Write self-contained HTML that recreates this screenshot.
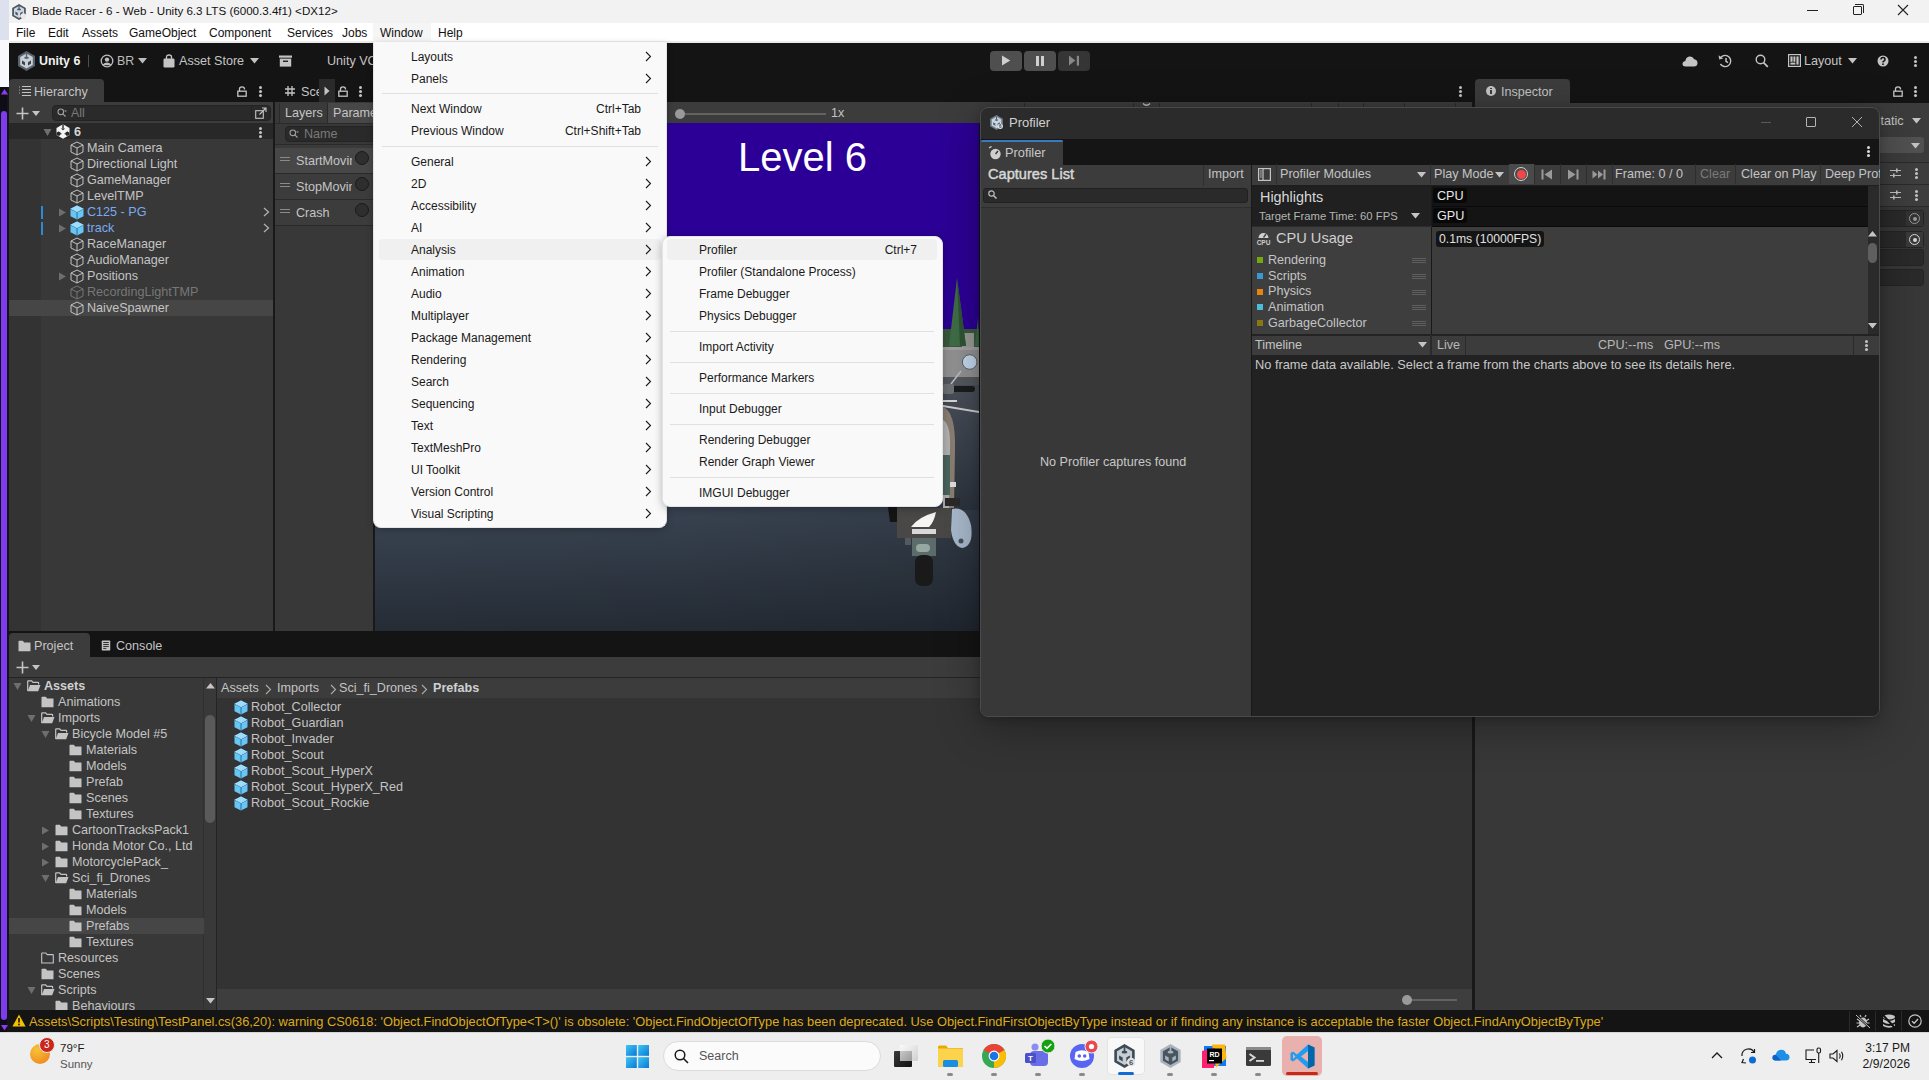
<!DOCTYPE html>
<html><head><meta charset="utf-8">
<style>
*{box-sizing:border-box;margin:0;padding:0}
html,body{width:1929px;height:1080px;overflow:hidden;background:#383838;font-family:"Liberation Sans",sans-serif;font-size:12px;color:#c4c4c4}
.a{position:absolute}
.t{position:absolute;white-space:nowrap;line-height:1}
.mb{font-size:12px;color:#111;top:26px;line-height:14px;z-index:5}
.kb{width:3px;height:3px;background:#c4c4c4;border-radius:50%;box-shadow:0 4px 0 #c4c4c4,0 8px 0 #c4c4c4}
.u{font-size:12.6px;color:#c4c4c4;line-height:13px}
.mi{font-size:12px;color:#1a1a1a;line-height:14px}
</style></head><body>
<!-- left strip -->
<div class="a" style="left:0;top:0;width:9px;height:40px;background:#dde1ed"></div>
<div class="a" style="left:0;top:40px;width:9px;height:47px;background:#f8f8fc"></div>
<div class="a" style="left:0;top:87px;width:9px;height:945px;background:#0e0c14"></div>
<!-- title bar -->
<div class="a" style="left:9px;top:0;width:1920px;height:23px;background:#f2f2f2"></div>
<!-- menu bar -->
<div class="a" style="left:9px;top:23px;width:1920px;height:20px;background:#ffffff"></div>
<!-- unity toolbar -->
<div class="a" style="left:9px;top:43px;width:1920px;height:36px;background:#141414"></div>
<!-- dock background -->
<div class="a" style="left:9px;top:79px;width:1920px;height:931px;background:#141414"></div>


<!-- ===== TITLE BAR TEXT ===== -->
<svg class="a" style="left:12px;top:4px" width="14" height="16" viewBox="0 0 17 20"><path d="M8.5 0 L17 5 L17 15 L8.5 20 L0 15 L0 5Z" fill="#4a5560"/><path d="M8.5 2.4 L14.8 6 L14.8 14 L8.5 17.6 L2.2 14 L2.2 6Z" fill="#cfd8e0"/><rect x="7.8" y="2.2" width="1.4" height="4.5" fill="#4a5560"/><ellipse cx="8.5" cy="6.8" rx="2.4" ry="1.1" fill="#4a5560"/><path d="M4 9.5 L7 11.2 L7 14.5 L4 12.8Z M13 9.5 L10 11.2 L10 14.5 L13 12.8Z" fill="#4a5560"/><circle cx="14" cy="15" r="3.5" fill="#e6eaee"/></svg>
<div class="t" style="left:32px;top:5px;font-size:11.6px;color:#111">Blade Racer - 6 - Web - Unity 6.3 LTS (6000.3.4f1) &lt;DX12&gt;</div>
<div class="a" style="left:1807px;top:10px;width:11px;height:1px;background:#222"></div>
<div class="a" style="left:1853px;top:6px;width:9px;height:9px;border:1px solid #222;border-radius:1px;background:#f2f2f2"></div>
<div class="a" style="left:1855px;top:4px;width:9px;height:9px;border-top:1px solid #222;border-right:1px solid #222;border-radius:0 2px 0 0"></div>
<svg class="a" style="left:1897px;top:4px" width="12" height="12" viewBox="0 0 12 12"><path d="M1 1L11 11M11 1L1 11" stroke="#222" stroke-width="1.1"/></svg>
<!-- ===== MENU BAR TEXT ===== -->
<div class="a" style="left:9px;top:41px;width:1920px;height:2px;background:#ebebeb"></div>
<div class="t mb" style="left:16px">File</div>
<div class="t mb" style="left:48px">Edit</div>
<div class="t mb" style="left:82px">Assets</div>
<div class="t mb" style="left:129px">GameObject</div>
<div class="t mb" style="left:209px">Component</div>
<div class="t mb" style="left:287px">Services</div>
<div class="t mb" style="left:342px">Jobs</div>
<div class="t mb" style="left:380px">Window</div>
<div class="t mb" style="left:438px">Help</div>


<!-- ===== UNITY TOOLBAR CONTENT ===== -->
<svg class="a" style="left:18px;top:51px" width="17" height="20" viewBox="0 0 17 20"><path d="M8.5 0 L17 5 L17 15 L8.5 20 L0 15 L0 5Z" fill="#58636d"/><path d="M8.5 2.4 L14.8 6 L14.8 14 L8.5 17.6 L2.2 14 L2.2 6Z" fill="#c9cdd5"/><rect x="7.8" y="2.2" width="1.4" height="4.5" fill="#58636d"/><ellipse cx="8.5" cy="6.8" rx="2.4" ry="1.1" fill="#58636d"/><path d="M4 9.5 L7 11.2 L7 14.5 L4 12.8Z M13 9.5 L10 11.2 L10 14.5 L13 12.8Z" fill="#3a434c"/></svg>
<div class="t" style="left:39px;top:55px;font-size:12.4px;font-weight:bold;color:#f0f0f0">Unity 6</div>
<div class="a" style="left:88px;top:55px;width:1px;height:12px;background:#4e4e4e"></div>
<svg class="a" style="left:100px;top:54px" width="14" height="14" viewBox="0 0 14 14"><circle cx="7" cy="7" r="5.8" fill="none" stroke="#bdbdbd" stroke-width="1.3"/><circle cx="7" cy="5.6" r="2.2" fill="#bdbdbd"/><path d="M3 11.2 Q7 7.5 11 11.2" fill="#bdbdbd" stroke="#bdbdbd" stroke-width="1.5"/></svg>
<div class="t" style="left:117px;top:55px;font-size:12.4px;color:#bdbdbd">BR</div>
<svg class="a" style="left:138px;top:58px" width="9" height="6" viewBox="0 0 9 6"><path d="M0 0H9L4.5 5.5Z" fill="#bdbdbd"/></svg>
<svg class="a" style="left:163px;top:54px" width="12" height="14" viewBox="0 0 12 14"><path d="M3.5 5 V3 Q3.5 1 6 1 Q8.5 1 8.5 3 V5" fill="none" stroke="#c4c4c4" stroke-width="1.3"/><rect x="0.5" y="4.5" width="11" height="9" rx="1.3" fill="#c4c4c4"/></svg>
<div class="t" style="left:179px;top:55px;font-size:12.6px;color:#c4c4c4">Asset Store</div>
<svg class="a" style="left:250px;top:58px" width="9" height="6" viewBox="0 0 9 6"><path d="M0 0H9L4.5 5.5Z" fill="#c4c4c4"/></svg>
<svg class="a" style="left:279px;top:55px" width="13" height="12" viewBox="0 0 13 12"><rect x="0" y="0.5" width="13" height="2.2" fill="#c4c4c4"/><rect x="0.8" y="3.6" width="11.4" height="8" fill="#c4c4c4"/><rect x="4" y="5.6" width="5" height="1.3" fill="#121212"/></svg>
<div class="t" style="left:327px;top:55px;font-size:12.6px;color:#c4c4c4">Unity VC</div>
<!-- play buttons -->
<div class="a" style="left:990px;top:51px;width:32px;height:20px;background:#4f4f4f;border-radius:4px"></div>
<div class="a" style="left:1024px;top:51px;width:32px;height:20px;background:#4f4f4f;border-radius:4px"></div>
<div class="a" style="left:1058px;top:51px;width:32px;height:20px;background:#353535;border-radius:4px"></div>
<svg class="a" style="left:1001px;top:55px" width="10" height="11" viewBox="0 0 10 11"><path d="M1 0.5 L9.3 5.5 L1 10.5Z" fill="#cfcfcf"/></svg>
<div class="a" style="left:1036px;top:56px;width:3px;height:10px;background:#cfcfcf"></div>
<div class="a" style="left:1041px;top:56px;width:3px;height:10px;background:#cfcfcf"></div>
<svg class="a" style="left:1068px;top:55px" width="12" height="11" viewBox="0 0 12 11"><path d="M1 0.5 L7.3 5.5 L1 10.5Z" fill="#888"/><rect x="8.8" y="0.8" width="2.2" height="9.8" fill="#888"/></svg>
<!-- right icons -->
<svg class="a" style="left:1682px;top:55px" width="16" height="12" viewBox="0 0 16 12"><path d="M3.5 11.5 Q0.3 11.5 0.5 8.5 Q0.8 6 3.4 6 Q3.8 2.6 7 1.6 Q10.6 0.8 12.2 4.3 Q15.6 4.8 15.5 8.3 Q15.2 11.5 12 11.5Z" fill="#c4c4c4"/></svg>
<svg class="a" style="left:1718px;top:54px" width="15" height="14" viewBox="0 0 15 14"><path d="M3 3.2 A5.6 5.6 0 1 1 2.4 10" fill="none" stroke="#c4c4c4" stroke-width="1.4"/><path d="M0.6 1.2 L1.2 5.4 L5.2 4.4Z" fill="#c4c4c4"/><path d="M8 4 V7.4 L10 8.6" fill="none" stroke="#c4c4c4" stroke-width="1.5"/></svg>
<svg class="a" style="left:1755px;top:54px" width="14" height="14" viewBox="0 0 14 14"><circle cx="5.5" cy="5.5" r="4.3" fill="none" stroke="#c4c4c4" stroke-width="1.4"/><path d="M8.6 8.6 L12.8 12.8" stroke="#c4c4c4" stroke-width="1.8"/></svg>
<svg class="a" style="left:1788px;top:54px" width="13" height="13" viewBox="0 0 13 13"><rect x="0.6" y="0.6" width="11.8" height="11.8" fill="none" stroke="#c4c4c4" stroke-width="1.2"/><rect x="2.4" y="2.4" width="2.2" height="5.4" fill="#c4c4c4"/><rect x="5.4" y="2.4" width="2" height="5.4" fill="#c4c4c4"/><rect x="8.4" y="2.4" width="2.2" height="8.2" fill="#c4c4c4"/><rect x="2.4" y="8.6" width="5" height="2" fill="#c4c4c4"/></svg>
<div class="t" style="left:1804px;top:55px;font-size:12.6px;color:#c4c4c4">Layout</div>
<svg class="a" style="left:1848px;top:58px" width="9" height="6" viewBox="0 0 9 6"><path d="M0 0H9L4.5 5.5Z" fill="#c4c4c4"/></svg>
<svg class="a" style="left:1877px;top:55px" width="12" height="12" viewBox="0 0 12 12"><circle cx="6" cy="6" r="5.5" fill="#c4c4c4"/><path d="M4 4.6 Q4 2.6 6 2.6 Q8 2.6 8 4.4 Q8 5.6 6.6 6.2 Q6 6.5 6 7.5" fill="none" stroke="#121212" stroke-width="1.5"/><circle cx="6" cy="9.2" r="0.9" fill="#121212"/></svg>
<div class="a kb" style="left:1914px;top:56px"></div>

<!-- ===== HIERARCHY ===== -->
<div class="a" style="left:9px;top:79px;width:95px;height:24px;background:#3c3c3c;border-radius:4px 4px 0 0"></div>
<div class="a" style="left:9px;top:102px;width:264px;height:21px;background:#3c3c3c"></div>
<div class="a" style="left:9px;top:123px;width:264px;height:508px;background:#383838"></div>
<div class="a" style="left:9px;top:139px;width:32px;height:492px;background:#333333"></div>
<div class="a" style="left:9px;top:123px;width:264px;height:16px;background:#282828"></div>
<!-- separator -->
<div class="a" style="left:273px;top:102px;width:2px;height:529px;background:#191919"></div>
<!-- hierarchy tab -->
<svg class="a" style="left:18px;top:85px" width="14" height="12" viewBox="0 0 14 12"><path d="M4 1.5H13M4 4.5H13M4 7.5H13M4 10.5H13" stroke="#c4c4c4" stroke-width="1.2"/><path d="M1.5 1.5V10.5" stroke="#c4c4c4" stroke-width="0.8" stroke-dasharray="1 2"/></svg>
<div class="t u" style="left:34px;top:86px;font-size:12.6px">Hierarchy</div>
<svg class="a" style="left:237px;top:86px" width="10" height="11" viewBox="0 0 10 11"><path d="M2.5 5 V3 Q2.5 0.8 5 0.8 Q7.5 0.8 7.5 3 V3.6" fill="none" stroke="#c4c4c4" stroke-width="1.3"/><rect x="0.8" y="5.2" width="8.4" height="5" fill="none" stroke="#c4c4c4" stroke-width="1.3"/></svg>
<div class="a kb" style="left:259px;top:86px"></div>
<!-- scene tab -->
<svg class="a" style="left:285px;top:86px" width="10" height="10" viewBox="0 0 10 10"><path d="M3 0V10M7 0V10M0 3H10M0 7H10" stroke="#c4c4c4" stroke-width="1.3"/></svg>
<div class="a" style="left:301px;top:79px;width:18px;height:23px;overflow:hidden"><div class="t u" style="left:0;top:7px;font-size:12.6px">Scene</div></div>
<div class="a" style="left:319px;top:79px;width:16px;height:23px;background:#2a2a2a"></div>
<svg class="a" style="left:324px;top:86px" width="6" height="10" viewBox="0 0 6 10"><path d="M0.5 0.5 L5.5 5 L0.5 9.5Z" fill="#c4c4c4"/></svg>
<svg class="a" style="left:338px;top:86px" width="10" height="11" viewBox="0 0 10 11"><path d="M2.5 5 V3 Q2.5 0.8 5 0.8 Q7.5 0.8 7.5 3 V3.6" fill="none" stroke="#c4c4c4" stroke-width="1.3"/><rect x="0.8" y="5.2" width="8.4" height="5" fill="none" stroke="#c4c4c4" stroke-width="1.3"/></svg>
<div class="a kb" style="left:359px;top:86px"></div>
<!-- hierarchy toolbar -->
<svg class="a" style="left:16px;top:107px" width="13" height="13" viewBox="0 0 13 13"><path d="M6.5 0.5V12.5M0.5 6.5H12.5" stroke="#c4c4c4" stroke-width="1.6"/></svg>
<svg class="a" style="left:32px;top:111px" width="8" height="5" viewBox="0 0 8 5"><path d="M0 0H8L4 5Z" fill="#c4c4c4"/></svg>
<div class="a" style="left:52px;top:105px;width:219px;height:16px;background:#2a2a2a;border:1px solid #232323;border-radius:4px"></div>
<svg class="a" style="left:57px;top:108px" width="10" height="10" viewBox="0 0 10 10"><circle cx="3.8" cy="3.8" r="2.8" fill="none" stroke="#a0a0a0" stroke-width="1.1"/><path d="M5.8 5.8L8.5 8.5" stroke="#a0a0a0" stroke-width="1.2"/><path d="M7 2.5H10L8.5 4Z" fill="#a0a0a0"/></svg>
<div class="t u" style="left:71px;top:107px;font-size:12.4px;color:#7a7a7a">All</div>
<div class="a" style="left:251px;top:106px;width:1px;height:14px;background:#232323"></div>
<svg class="a" style="left:255px;top:107px" width="12" height="12" viewBox="0 0 12 12"><rect x="0.7" y="3.7" width="7.6" height="7.6" fill="none" stroke="#c4c4c4" stroke-width="1.1"/><path d="M4.5 7.5 L11 1 M7 1H11V5" fill="none" stroke="#c4c4c4" stroke-width="1.1"/></svg>
<!-- scene row -->
<svg class="a" style="left:43px;top:128px" width="9" height="9" viewBox="0 0 9 9"><path d="M0.5 1 L8.5 1 L4.5 8Z" fill="#6e6e6e"/></svg>
<svg class="a" style="left:56px;top:124px" width="14" height="15" viewBox="0 0 14 15"><path d="M7 0.3 L13.5 4 L13.5 11 L7 14.7 L0.5 11 L0.5 4Z" fill="#f4f4f4"/><rect x="6.3" y="0.3" width="1.4" height="4.2" fill="#282828"/><path d="M4.8 4.6 H9.2 L7 6.2Z" fill="#282828"/><path d="M0.5 8.5 L3 7.5 L5 10 L3.2 12 L0.5 11Z M13.5 8.5 L11 7.5 L9 10 L10.8 12 L13.5 11Z" fill="#282828"/><path d="M2.5 8 L5.5 9.8 M11.5 8 L8.5 9.8" stroke="#282828" stroke-width="1"/></svg>
<div class="t u" style="left:74px;top:126px;font-size:12.6px;font-weight:bold;color:#d4d4d4">6</div>
<div class="a kb" style="left:259px;top:127px"></div>
<!-- selected row -->
<div class="a" style="left:9px;top:300px;width:264px;height:16px;background:#464646"></div>
<svg class="a" style="left:70px;top:141px" width="14" height="15" viewBox="0 0 14 15"><path d="M7 1 L13 4 L13 11 L7 14 L1 11 L1 4Z M1 4 L7 7 L13 4 M7 7 L7 14" fill="none" stroke="#c4c4c4" stroke-width="1"/></svg>
<div class="t u" style="left:87px;top:142px;color:#c4c4c4">Main Camera</div>
<svg class="a" style="left:70px;top:157px" width="14" height="15" viewBox="0 0 14 15"><path d="M7 1 L13 4 L13 11 L7 14 L1 11 L1 4Z M1 4 L7 7 L13 4 M7 7 L7 14" fill="none" stroke="#c4c4c4" stroke-width="1"/></svg>
<div class="t u" style="left:87px;top:158px;color:#c4c4c4">Directional Light</div>
<svg class="a" style="left:70px;top:173px" width="14" height="15" viewBox="0 0 14 15"><path d="M7 1 L13 4 L13 11 L7 14 L1 11 L1 4Z M1 4 L7 7 L13 4 M7 7 L7 14" fill="none" stroke="#c4c4c4" stroke-width="1"/></svg>
<div class="t u" style="left:87px;top:174px;color:#c4c4c4">GameManager</div>
<svg class="a" style="left:70px;top:189px" width="14" height="15" viewBox="0 0 14 15"><path d="M7 1 L13 4 L13 11 L7 14 L1 11 L1 4Z M1 4 L7 7 L13 4 M7 7 L7 14" fill="none" stroke="#c4c4c4" stroke-width="1"/></svg>
<div class="t u" style="left:87px;top:190px;color:#c4c4c4">LevelTMP</div>
<div class="a" style="left:41px;top:206px;width:2px;height:13px;background:#2a8ad6"></div>
<svg class="a" style="left:70px;top:205px" width="14" height="15" viewBox="0 0 14 15"><path d="M7 0.5 L13.5 3.8 L13.5 11.2 L7 14.5 L0.5 11.2 L0.5 3.8Z" fill="#67c6f5"/><path d="M0.8 4 L7 7.2 L13.2 4 M7 7.2 L7 14.3" fill="none" stroke="#2f6f95" stroke-width="1"/><path d="M7 0.5 L13.5 3.8 L7 7.2 L0.5 3.8Z" fill="#9ddcfb"/></svg>
<div class="t u" style="left:87px;top:206px;color:#7baaf0">C125 - PG</div>
<svg class="a" style="left:263px;top:207px" width="7" height="10" viewBox="0 0 7 10"><path d="M1 1L5.5 5L1 9" fill="none" stroke="#b0b0b0" stroke-width="1.3"/></svg>
<svg class="a" style="left:58px;top:208px" width="9" height="9" viewBox="0 0 9 9"><path d="M1 0.5 L8 4.5 L1 8.5Z" fill="#6e6e6e"/></svg>
<div class="a" style="left:41px;top:222px;width:2px;height:13px;background:#2a8ad6"></div>
<svg class="a" style="left:70px;top:221px" width="14" height="15" viewBox="0 0 14 15"><path d="M7 0.5 L13.5 3.8 L13.5 11.2 L7 14.5 L0.5 11.2 L0.5 3.8Z" fill="#67c6f5"/><path d="M0.8 4 L7 7.2 L13.2 4 M7 7.2 L7 14.3" fill="none" stroke="#2f6f95" stroke-width="1"/><path d="M7 0.5 L13.5 3.8 L7 7.2 L0.5 3.8Z" fill="#9ddcfb"/></svg>
<div class="t u" style="left:87px;top:222px;color:#7baaf0">track</div>
<svg class="a" style="left:263px;top:223px" width="7" height="10" viewBox="0 0 7 10"><path d="M1 1L5.5 5L1 9" fill="none" stroke="#b0b0b0" stroke-width="1.3"/></svg>
<svg class="a" style="left:58px;top:224px" width="9" height="9" viewBox="0 0 9 9"><path d="M1 0.5 L8 4.5 L1 8.5Z" fill="#6e6e6e"/></svg>
<svg class="a" style="left:70px;top:237px" width="14" height="15" viewBox="0 0 14 15"><path d="M7 1 L13 4 L13 11 L7 14 L1 11 L1 4Z M1 4 L7 7 L13 4 M7 7 L7 14" fill="none" stroke="#c4c4c4" stroke-width="1"/></svg>
<div class="t u" style="left:87px;top:238px;color:#c4c4c4">RaceManager</div>
<svg class="a" style="left:70px;top:253px" width="14" height="15" viewBox="0 0 14 15"><path d="M7 1 L13 4 L13 11 L7 14 L1 11 L1 4Z M1 4 L7 7 L13 4 M7 7 L7 14" fill="none" stroke="#c4c4c4" stroke-width="1"/></svg>
<div class="t u" style="left:87px;top:254px;color:#c4c4c4">AudioManager</div>
<svg class="a" style="left:70px;top:269px" width="14" height="15" viewBox="0 0 14 15"><path d="M7 1 L13 4 L13 11 L7 14 L1 11 L1 4Z M1 4 L7 7 L13 4 M7 7 L7 14" fill="none" stroke="#c4c4c4" stroke-width="1"/></svg>
<div class="t u" style="left:87px;top:270px;color:#c4c4c4">Positions</div>
<svg class="a" style="left:58px;top:272px" width="9" height="9" viewBox="0 0 9 9"><path d="M1 0.5 L8 4.5 L1 8.5Z" fill="#6e6e6e"/></svg>
<svg class="a" style="left:70px;top:285px" width="14" height="15" viewBox="0 0 14 15"><path d="M7 1 L13 4 L13 11 L7 14 L1 11 L1 4Z M1 4 L7 7 L13 4 M7 7 L7 14" fill="none" stroke="#777777" stroke-width="1"/></svg>
<div class="t u" style="left:87px;top:286px;color:#777777">RecordingLightTMP</div>
<svg class="a" style="left:70px;top:301px" width="14" height="15" viewBox="0 0 14 15"><path d="M7 1 L13 4 L13 11 L7 14 L1 11 L1 4Z M1 4 L7 7 L13 4 M7 7 L7 14" fill="none" stroke="#c4c4c4" stroke-width="1"/></svg>
<div class="t u" style="left:87px;top:302px;color:#c4c4c4">NaiveSpawner</div>
<!-- ===== ANIMATOR ===== -->
<div class="a" style="left:275px;top:102px;width:98px;height:529px;background:#383838"></div>
<div class="a" style="left:279px;top:103px;width:1px;height:20px;background:#2a2a2a"></div>
<div class="a" style="left:280px;top:103px;width:47px;height:20px;background:#3a3a3a"></div>
<div class="a" style="left:327px;top:103px;width:1px;height:20px;background:#2a2a2a"></div>
<div class="a" style="left:328px;top:103px;width:45px;height:20px;background:#474747"></div>
<div class="a" style="left:275px;top:123px;width:98px;height:1px;background:#2a2a2a"></div>
<div class="t u" style="left:285px;top:107px">Layers</div>
<div class="a" style="left:333px;top:103px;width:40px;height:20px;overflow:hidden"><div class="t u" style="left:0;top:4px">Parameters</div></div>
<div class="a" style="left:285px;top:126px;width:100px;height:16px;background:#2a2a2a;border:1px solid #232323;border-radius:4px"></div>
<svg class="a" style="left:289px;top:129px" width="10" height="10" viewBox="0 0 10 10"><circle cx="3.8" cy="3.8" r="2.8" fill="none" stroke="#a0a0a0" stroke-width="1.1"/><path d="M5.8 5.8L8.5 8.5" stroke="#a0a0a0" stroke-width="1.2"/><path d="M7 2.5H10L8.5 4Z" fill="#a0a0a0"/></svg>
<div class="t u" style="left:304px;top:128px;color:#7a7a7a">Name</div>
<div class="a" style="left:275px;top:144px;width:98px;height:1px;background:#2a2a2a"></div>
<div class="a" style="left:275px;top:145px;width:98px;height:3px;background:#3a3a3a"></div>
<div class="a" style="left:275px;top:148px;width:98px;height:25px;background:#474747"></div>
<div class="a" style="left:275px;top:173px;width:98px;height:1px;background:#2a2a2a"></div>
<div class="a" style="left:280px;top:157px;width:10px;height:1px;background:#8a8a8a"></div>
<div class="a" style="left:280px;top:160px;width:10px;height:1px;background:#8a8a8a"></div>
<div class="a" style="left:296px;top:148px;width:56px;height:25px;overflow:hidden"><div class="t u" style="left:0;top:7px">StartMoving</div></div>
<div class="a" style="left:355px;top:151px;width:14px;height:14px;border-radius:50%;background:#2e2e2e;border:1px solid #1a1a1a"></div>
<div class="a" style="left:275px;top:174px;width:98px;height:25px;background:#3c3c3c"></div>
<div class="a" style="left:275px;top:199px;width:98px;height:1px;background:#2a2a2a"></div>
<div class="a" style="left:280px;top:183px;width:10px;height:1px;background:#8a8a8a"></div>
<div class="a" style="left:280px;top:186px;width:10px;height:1px;background:#8a8a8a"></div>
<div class="a" style="left:296px;top:174px;width:56px;height:25px;overflow:hidden"><div class="t u" style="left:0;top:7px">StopMoving</div></div>
<div class="a" style="left:355px;top:177px;width:14px;height:14px;border-radius:50%;background:#2e2e2e;border:1px solid #1a1a1a"></div>
<div class="a" style="left:275px;top:200px;width:98px;height:25px;background:#3c3c3c"></div>
<div class="a" style="left:275px;top:225px;width:98px;height:1px;background:#2a2a2a"></div>
<div class="a" style="left:280px;top:209px;width:10px;height:1px;background:#8a8a8a"></div>
<div class="a" style="left:280px;top:212px;width:10px;height:1px;background:#8a8a8a"></div>
<div class="a" style="left:296px;top:200px;width:70px;height:25px;overflow:hidden"><div class="t u" style="left:0;top:7px">Crash</div></div>
<div class="a" style="left:355px;top:203px;width:14px;height:14px;border-radius:50%;background:#2e2e2e;border:1px solid #1a1a1a"></div>
<div class="a" style="left:373px;top:102px;width:2px;height:529px;background:#191919"></div>
<!-- ===== GAME VIEW ===== -->
<div class="a" style="left:375px;top:102px;width:1097px;height:21px;background:#3c3c3c"></div>
<div class="a" style="left:375px;top:123px;width:604px;height:508px;overflow:hidden;background:#2c0096">
 <div class="a" style="left:0;top:206px;width:604px;height:302px;background:linear-gradient(to right,rgba(0,0,0,0) 0%,rgba(0,0,0,0.04) 50%,rgba(0,0,0,0.14) 100%),linear-gradient(to bottom,#4a5666 0%,#3d4858 55%,#36404d 68%,#252c36 100%)"></div>
</div>
<svg class="a" style="left:375px;top:123px" width="604" height="508" viewBox="375 123 604 508">
 <rect x="943" y="329" width="36" height="18" fill="#3b5a3e"/>
 <rect x="962" y="333" width="12" height="14" fill="#9a9a96"/>
 <path d="M949 346 L957 278 L966 346Z" fill="#3f6e46"/>
 <path d="M957 278 L966 346 L960 346Z" fill="#2e5535"/>
 <path d="M975 346 L978 318 L979 346Z" fill="#3f6e46"/>
 <rect x="943" y="347" width="36" height="30" fill="#939393"/>
 <rect x="943" y="347" width="36" height="3" fill="#a3a3a3"/>
 <rect x="943" y="377" width="36" height="8" fill="#55595e"/>
 <defs><linearGradient id="rd" x1="0" y1="0" x2="0" y2="1"><stop offset="0" stop-color="#4a505a"/><stop offset="1" stop-color="#2c333d"/></linearGradient></defs><rect x="943" y="385" width="36" height="125" fill="url(#rd)"/>
 <path d="M943 400 H957 V402 H943Z" fill="#d8d8d8"/>
 <path d="M943 405 L979 411 L979 413 L943 407Z" fill="#d0d0d0"/>
 <path d="M961 371 L951 384" stroke="#b8c0c8" stroke-width="1.5"/>
 <circle cx="969.7" cy="362" r="7.3" fill="#c5daee" stroke="#56606a" stroke-width="1"/>
 <rect x="950" y="386" width="25" height="6" rx="3" fill="#1c1c1c"/>
 <rect x="943" y="384" width="11" height="10" rx="2" fill="#6e7276"/>
 <path d="M943 407 Q956 412 955 450 L954 508 L943 508Z" fill="#8c7f74"/>
 <path d="M943 420 Q951 424 950 450 L949 508 L943 508Z" fill="#b4b4b4"/>
 <rect x="943" y="455" width="7" height="40" fill="#4d6660"/>
 <rect x="950" y="482" width="6" height="5" fill="#e0e0e0"/>
 <path d="M945 498 H960 V506 H945Z" fill="#2a2a2a"/>
 <path d="M888 507 H897 V522 H890Z" fill="#141414"/>
 <rect x="897" y="508" width="54" height="30" fill="#4a4846"/>
 <path d="M911 527 Q918 517 936 512 Q934 522 929 527Z" fill="#f4f4f4"/>
 <rect x="912" y="529" width="24" height="5" fill="#d8d8d8"/>
 <rect x="905" y="538" width="6" height="7" fill="#55595c"/>
 <rect x="912" y="538" width="24" height="18" fill="#5c6c6a"/>
 <rect x="916" y="544" width="14" height="8" rx="4" fill="#97a8a2"/>
 <rect x="915" y="555" width="18" height="31" rx="7" fill="#1a1a1a"/>
 <path d="M952 509 Q966 506 971 525 Q974 546 962 548 Q953 546 951 530Z" fill="#a9bacd"/>
 <circle cx="961" cy="541" r="2.5" fill="#45505c"/>
</svg>
<!-- game toolbar bits -->
<div class="a" style="left:1024px;top:103px;width:1px;height:5px;background:#2a2a2a"></div><div class="a" style="left:1133px;top:103px;width:1px;height:5px;background:#2a2a2a"></div><div class="a" style="left:1159px;top:103px;width:1px;height:5px;background:#2a2a2a"></div><div class="a" style="left:1311px;top:103px;width:1px;height:5px;background:#2a2a2a"></div><div class="a" style="left:1338px;top:103px;width:1px;height:5px;background:#2a2a2a"></div><div class="a" style="left:1363px;top:103px;width:1px;height:5px;background:#2a2a2a"></div><div class="a" style="left:1404px;top:103px;width:1px;height:5px;background:#2a2a2a"></div><div class="a" style="left:1455px;top:103px;width:1px;height:5px;background:#2a2a2a"></div><svg class="a" style="left:1142px;top:103px" width="9" height="4" viewBox="0 0 9 4"><path d="M1 0.5 Q4.5 4 8 0.5" stroke="#c4c4c4" stroke-width="1.2" fill="none"/></svg>
<div class="a" style="left:680px;top:113px;width:146px;height:2px;background:#626262"></div>
<div class="a" style="left:675px;top:109px;width:10px;height:10px;border-radius:50%;background:#9a9a9a"></div>
<div class="t u" style="left:831px;top:107px">1x</div>
<div class="t" style="left:660px;top:210px;font-size:40px;color:#ffffff;line-height:40px;left:738px;top:137px">Level 6</div>
<!-- ===== INSPECTOR ===== -->
<div class="a" style="left:1475px;top:79px;width:95px;height:24px;background:#3c3c3c;border-radius:4px 4px 0 0"></div>
<div class="a" style="left:1472px;top:102px;width:3px;height:908px;background:#191919"></div>
<div class="a" style="left:1475px;top:103px;width:454px;height:907px;background:#383838"></div>
<!-- ===== INSPECTOR TAB & CONTENT ===== -->
<div class="a kb" style="left:1459px;top:86px"></div>
<div class="a" style="left:1486px;top:86px;width:10px;height:10px;border-radius:50%;background:#c4c4c4"></div>
<div class="a" style="left:1490px;top:90px;width:2px;height:4px;background:#3c3c3c"></div>
<div class="a" style="left:1490px;top:87.5px;width:2px;height:1.5px;background:#3c3c3c"></div>
<div class="t u" style="left:1501px;top:86px">Inspector</div>
<svg class="a" style="left:1893px;top:86px" width="10" height="11" viewBox="0 0 10 11"><path d="M2.5 5 V3 Q2.5 0.8 5 0.8 Q7.5 0.8 7.5 3 V3.6" fill="none" stroke="#c4c4c4" stroke-width="1.3"/><rect x="0.8" y="5.2" width="8.4" height="5" fill="none" stroke="#c4c4c4" stroke-width="1.3"/></svg>
<div class="a kb" style="left:1914px;top:86px"></div>
<div class="a" style="left:1475px;top:103px;width:454px;height:59px;background:#3c3c3c"></div>
<div class="t u" style="left:1872px;top:115px">Static</div>
<svg class="a" style="left:1912px;top:118px" width="9" height="6" viewBox="0 0 9 6"><path d="M0 0H9L4.5 5.5Z" fill="#c4c4c4"/></svg>
<div class="a" style="left:1860px;top:137px;width:64px;height:16px;background:#515151;border-radius:3px"></div>
<svg class="a" style="left:1911px;top:143px" width="9" height="6" viewBox="0 0 9 6"><path d="M0 0H9L4.5 5.5Z" fill="#c4c4c4"/></svg>
<div class="a" style="left:1475px;top:162px;width:454px;height:1px;background:#2a2a2a"></div>
<div class="a" style="left:1475px;top:163px;width:454px;height:21px;background:#3e3e3e"></div>
<div class="a" style="left:1475px;top:184px;width:454px;height:1px;background:#2a2a2a"></div>
<div class="a" style="left:1475px;top:185px;width:454px;height:21px;background:#3e3e3e"></div>
<div class="a" style="left:1475px;top:206px;width:454px;height:1px;background:#2a2a2a"></div>
<svg class="a" style="left:1890px;top:168px" width="11" height="10" viewBox="0 0 11 10"><path d="M0 2.5H11M0 7.5H11" stroke="#c4c4c4" stroke-width="1.2"/><rect x="6" y="0.5" width="1.6" height="4" fill="#c4c4c4"/><rect x="3" y="5.5" width="1.6" height="4" fill="#c4c4c4"/></svg>
<div class="a kb" style="left:1915px;top:168px"></div>
<svg class="a" style="left:1890px;top:190px" width="11" height="10" viewBox="0 0 11 10"><path d="M0 2.5H11M0 7.5H11" stroke="#c4c4c4" stroke-width="1.2"/><rect x="6" y="0.5" width="1.6" height="4" fill="#c4c4c4"/><rect x="3" y="5.5" width="1.6" height="4" fill="#c4c4c4"/></svg>
<div class="a kb" style="left:1915px;top:190px"></div>
<div class="a" style="left:1860px;top:210px;width:64px;height:17px;background:#2a2a2a;border:1px solid #242424;border-radius:3px"></div>
<div class="a" style="left:1906px;top:211px;width:17px;height:15px;background:#333"></div>
<div class="a" style="left:1909px;top:213px;width:11px;height:11px;border-radius:50%;border:1.2px solid #9a9a9a"></div>
<div class="a" style="left:1912.5px;top:216.5px;width:4px;height:4px;border-radius:50%;background:#9a9a9a"></div>
<div class="a" style="left:1860px;top:231px;width:64px;height:17px;background:#2a2a2a;border:1px solid #242424;border-radius:3px"></div>
<div class="a" style="left:1906px;top:232px;width:17px;height:15px;background:#3a3a3a"></div>
<div class="a" style="left:1909px;top:234px;width:11px;height:11px;border-radius:50%;border:1.2px solid #d8d8d8"></div>
<div class="a" style="left:1912.5px;top:237.5px;width:4px;height:4px;border-radius:50%;background:#d8d8d8"></div>
<div class="a" style="left:1860px;top:249px;width:64px;height:17px;background:#2a2a2a;border:1px solid #242424;border-radius:3px"></div>
<div class="a" style="left:1860px;top:269px;width:64px;height:17px;background:#2a2a2a;border:1px solid #242424;border-radius:3px"></div>
<!-- ===== PROJECT ===== -->
<div class="a" style="left:9px;top:633px;width:81px;height:24px;background:#3c3c3c;border-radius:4px 4px 0 0"></div>
<div class="a" style="left:9px;top:657px;width:1463px;height:20px;background:#3c3c3c"></div>
<div class="a" style="left:9px;top:677px;width:1463px;height:1px;background:#242424"></div>
<div class="a" style="left:9px;top:678px;width:195px;height:332px;background:#383838"></div>
<div class="a" style="left:203px;top:678px;width:1px;height:332px;background:#303030"></div><div class="a" style="left:204px;top:678px;width:12px;height:332px;background:#393939"></div>
<div class="a" style="left:216px;top:678px;width:1px;height:332px;background:#242424"></div>
<div class="a" style="left:217px;top:678px;width:1255px;height:311px;background:#333333"></div>
<div class="a" style="left:217px;top:989px;width:1255px;height:21px;background:#3e3e3e"></div>


<!-- project tabs -->
<svg class="a" style="left:18px;top:640px" width="13" height="12" viewBox="0 0 13 12"><path d="M0.5 1.5 Q0.5 0.8 1.2 0.8 H4.8 L6.2 2.4 H12 Q12.5 2.4 12.5 3 V11.2 H0.5Z" fill="#c4c4c4"/></svg>
<div class="t u" style="left:34px;top:640px">Project</div>
<svg class="a" style="left:101px;top:640px" width="10" height="11" viewBox="0 0 11 13"><rect x="0.5" y="0.5" width="10" height="12" rx="1" fill="#c4c4c4"/><path d="M2.2 3H8.8M2.2 5.3H8.8M2.2 7.6H8.8M2.2 9.9H6" stroke="#121212" stroke-width="1"/></svg>
<div class="t u" style="left:116px;top:640px">Console</div>
<svg class="a" style="left:16px;top:661px" width="13" height="13" viewBox="0 0 13 13"><path d="M6.5 0.5V12.5M0.5 6.5H12.5" stroke="#c4c4c4" stroke-width="1.6"/></svg>
<svg class="a" style="left:32px;top:665px" width="8" height="5" viewBox="0 0 8 5"><path d="M0 0H8L4 5Z" fill="#c4c4c4"/></svg>
<!-- tree -->
<div class="a" style="left:9px;top:918px;width:195px;height:16px;background:#464646"></div>
<div class="a" style="left:9px;top:678px;width:195px;height:332px;overflow:hidden">
<svg class="a" style="left:4px;top:4px" width="9" height="9" viewBox="0 0 9 9"><path d="M0.5 1 L8.5 1 L4.5 8Z" fill="#6e6e6e"/></svg>
<svg class="a" style="left:18px;top:2px" width="14" height="12" viewBox="0 0 14 12"><path d="M0.7 11 V1.4 Q0.7 0.8 1.3 0.8 H4.6 L6 2.4 H11 Q11.6 2.4 11.6 3 V4.6" fill="none" stroke="#c4c4c4" stroke-width="1.2"/><path d="M0.7 11.2 L3 5 H13.5 L11.2 11.2Z" fill="#c4c4c4"/></svg>
<div class="t u" style="left:35px;top:2px;font-weight:bold;color:#d0d0d0;">Assets</div>
<svg class="a" style="left:32px;top:18px" width="13" height="12" viewBox="0 0 13 12"><path d="M0.5 1.5 Q0.5 0.8 1.2 0.8 H4.8 L6.2 2.4 H12 Q12.5 2.4 12.5 3 V11.2 H0.5Z" fill="#c4c4c4"/></svg>
<div class="t u" style="left:49px;top:18px;">Animations</div>
<svg class="a" style="left:18px;top:36px" width="9" height="9" viewBox="0 0 9 9"><path d="M0.5 1 L8.5 1 L4.5 8Z" fill="#6e6e6e"/></svg>
<svg class="a" style="left:32px;top:34px" width="14" height="12" viewBox="0 0 14 12"><path d="M0.7 11 V1.4 Q0.7 0.8 1.3 0.8 H4.6 L6 2.4 H11 Q11.6 2.4 11.6 3 V4.6" fill="none" stroke="#c4c4c4" stroke-width="1.2"/><path d="M0.7 11.2 L3 5 H13.5 L11.2 11.2Z" fill="#c4c4c4"/></svg>
<div class="t u" style="left:49px;top:34px;">Imports</div>
<svg class="a" style="left:32px;top:52px" width="9" height="9" viewBox="0 0 9 9"><path d="M0.5 1 L8.5 1 L4.5 8Z" fill="#6e6e6e"/></svg>
<svg class="a" style="left:46px;top:50px" width="14" height="12" viewBox="0 0 14 12"><path d="M0.7 11 V1.4 Q0.7 0.8 1.3 0.8 H4.6 L6 2.4 H11 Q11.6 2.4 11.6 3 V4.6" fill="none" stroke="#c4c4c4" stroke-width="1.2"/><path d="M0.7 11.2 L3 5 H13.5 L11.2 11.2Z" fill="#c4c4c4"/></svg>
<div class="t u" style="left:63px;top:50px;">Bicycle Model #5</div>
<svg class="a" style="left:60px;top:66px" width="13" height="12" viewBox="0 0 13 12"><path d="M0.5 1.5 Q0.5 0.8 1.2 0.8 H4.8 L6.2 2.4 H12 Q12.5 2.4 12.5 3 V11.2 H0.5Z" fill="#c4c4c4"/></svg>
<div class="t u" style="left:77px;top:66px;">Materials</div>
<svg class="a" style="left:60px;top:82px" width="13" height="12" viewBox="0 0 13 12"><path d="M0.5 1.5 Q0.5 0.8 1.2 0.8 H4.8 L6.2 2.4 H12 Q12.5 2.4 12.5 3 V11.2 H0.5Z" fill="#c4c4c4"/></svg>
<div class="t u" style="left:77px;top:82px;">Models</div>
<svg class="a" style="left:60px;top:98px" width="13" height="12" viewBox="0 0 13 12"><path d="M0.5 1.5 Q0.5 0.8 1.2 0.8 H4.8 L6.2 2.4 H12 Q12.5 2.4 12.5 3 V11.2 H0.5Z" fill="#c4c4c4"/></svg>
<div class="t u" style="left:77px;top:98px;">Prefab</div>
<svg class="a" style="left:60px;top:114px" width="13" height="12" viewBox="0 0 13 12"><path d="M0.5 1.5 Q0.5 0.8 1.2 0.8 H4.8 L6.2 2.4 H12 Q12.5 2.4 12.5 3 V11.2 H0.5Z" fill="#c4c4c4"/></svg>
<div class="t u" style="left:77px;top:114px;">Scenes</div>
<svg class="a" style="left:60px;top:130px" width="13" height="12" viewBox="0 0 13 12"><path d="M0.5 1.5 Q0.5 0.8 1.2 0.8 H4.8 L6.2 2.4 H12 Q12.5 2.4 12.5 3 V11.2 H0.5Z" fill="#c4c4c4"/></svg>
<div class="t u" style="left:77px;top:130px;">Textures</div>
<svg class="a" style="left:32px;top:148px" width="9" height="9" viewBox="0 0 9 9"><path d="M1 0.5 L8 4.5 L1 8.5Z" fill="#6e6e6e"/></svg>
<svg class="a" style="left:46px;top:146px" width="13" height="12" viewBox="0 0 13 12"><path d="M0.5 1.5 Q0.5 0.8 1.2 0.8 H4.8 L6.2 2.4 H12 Q12.5 2.4 12.5 3 V11.2 H0.5Z" fill="#c4c4c4"/></svg>
<div class="t u" style="left:63px;top:146px;">CartoonTracksPack1</div>
<svg class="a" style="left:32px;top:164px" width="9" height="9" viewBox="0 0 9 9"><path d="M1 0.5 L8 4.5 L1 8.5Z" fill="#6e6e6e"/></svg>
<svg class="a" style="left:46px;top:162px" width="13" height="12" viewBox="0 0 13 12"><path d="M0.5 1.5 Q0.5 0.8 1.2 0.8 H4.8 L6.2 2.4 H12 Q12.5 2.4 12.5 3 V11.2 H0.5Z" fill="#c4c4c4"/></svg>
<div class="t u" style="left:63px;top:162px;">Honda Motor Co., Ltd</div>
<svg class="a" style="left:32px;top:180px" width="9" height="9" viewBox="0 0 9 9"><path d="M1 0.5 L8 4.5 L1 8.5Z" fill="#6e6e6e"/></svg>
<svg class="a" style="left:46px;top:178px" width="13" height="12" viewBox="0 0 13 12"><path d="M0.5 1.5 Q0.5 0.8 1.2 0.8 H4.8 L6.2 2.4 H12 Q12.5 2.4 12.5 3 V11.2 H0.5Z" fill="#c4c4c4"/></svg>
<div class="t u" style="left:63px;top:178px;">MotorcyclePack_</div>
<svg class="a" style="left:32px;top:196px" width="9" height="9" viewBox="0 0 9 9"><path d="M0.5 1 L8.5 1 L4.5 8Z" fill="#6e6e6e"/></svg>
<svg class="a" style="left:46px;top:194px" width="14" height="12" viewBox="0 0 14 12"><path d="M0.7 11 V1.4 Q0.7 0.8 1.3 0.8 H4.6 L6 2.4 H11 Q11.6 2.4 11.6 3 V4.6" fill="none" stroke="#c4c4c4" stroke-width="1.2"/><path d="M0.7 11.2 L3 5 H13.5 L11.2 11.2Z" fill="#c4c4c4"/></svg>
<div class="t u" style="left:63px;top:194px;">Sci_fi_Drones</div>
<svg class="a" style="left:60px;top:210px" width="13" height="12" viewBox="0 0 13 12"><path d="M0.5 1.5 Q0.5 0.8 1.2 0.8 H4.8 L6.2 2.4 H12 Q12.5 2.4 12.5 3 V11.2 H0.5Z" fill="#c4c4c4"/></svg>
<div class="t u" style="left:77px;top:210px;">Materials</div>
<svg class="a" style="left:60px;top:226px" width="13" height="12" viewBox="0 0 13 12"><path d="M0.5 1.5 Q0.5 0.8 1.2 0.8 H4.8 L6.2 2.4 H12 Q12.5 2.4 12.5 3 V11.2 H0.5Z" fill="#c4c4c4"/></svg>
<div class="t u" style="left:77px;top:226px;">Models</div>
<svg class="a" style="left:60px;top:242px" width="13" height="12" viewBox="0 0 13 12"><path d="M0.5 1.5 Q0.5 0.8 1.2 0.8 H4.8 L6.2 2.4 H12 Q12.5 2.4 12.5 3 V11.2 H0.5Z" fill="#c4c4c4"/></svg>
<div class="t u" style="left:77px;top:242px;">Prefabs</div>
<svg class="a" style="left:60px;top:258px" width="13" height="12" viewBox="0 0 13 12"><path d="M0.5 1.5 Q0.5 0.8 1.2 0.8 H4.8 L6.2 2.4 H12 Q12.5 2.4 12.5 3 V11.2 H0.5Z" fill="#c4c4c4"/></svg>
<div class="t u" style="left:77px;top:258px;">Textures</div>
<svg class="a" style="left:32px;top:274px" width="13" height="12" viewBox="0 0 13 12"><path d="M0.7 1.5 Q0.7 1 1.2 1 H4.8 L6.2 2.6 H11.8 Q12.3 2.6 12.3 3.1 V11 H0.7Z" fill="none" stroke="#c4c4c4" stroke-width="1.1"/></svg>
<div class="t u" style="left:49px;top:274px;">Resources</div>
<svg class="a" style="left:32px;top:290px" width="13" height="12" viewBox="0 0 13 12"><path d="M0.5 1.5 Q0.5 0.8 1.2 0.8 H4.8 L6.2 2.4 H12 Q12.5 2.4 12.5 3 V11.2 H0.5Z" fill="#c4c4c4"/></svg>
<div class="t u" style="left:49px;top:290px;">Scenes</div>
<svg class="a" style="left:18px;top:308px" width="9" height="9" viewBox="0 0 9 9"><path d="M0.5 1 L8.5 1 L4.5 8Z" fill="#6e6e6e"/></svg>
<svg class="a" style="left:32px;top:306px" width="14" height="12" viewBox="0 0 14 12"><path d="M0.7 11 V1.4 Q0.7 0.8 1.3 0.8 H4.6 L6 2.4 H11 Q11.6 2.4 11.6 3 V4.6" fill="none" stroke="#c4c4c4" stroke-width="1.2"/><path d="M0.7 11.2 L3 5 H13.5 L11.2 11.2Z" fill="#c4c4c4"/></svg>
<div class="t u" style="left:49px;top:306px;">Scripts</div>
<svg class="a" style="left:46px;top:322px" width="13" height="12" viewBox="0 0 13 12"><path d="M0.5 1.5 Q0.5 0.8 1.2 0.8 H4.8 L6.2 2.4 H12 Q12.5 2.4 12.5 3 V11.2 H0.5Z" fill="#c4c4c4"/></svg>
<div class="t u" style="left:63px;top:322px;">Behaviours</div>
</div>
<svg class="a" style="left:206px;top:683px" width="9" height="6" viewBox="0 0 9 6"><path d="M0 5.5H9L4.5 0Z" fill="#c4c4c4"/></svg>
<div class="a" style="left:205px;top:715px;width:10px;height:108px;background:#5a5a5a;border-radius:5px"></div>
<svg class="a" style="left:206px;top:998px" width="9" height="6" viewBox="0 0 9 6"><path d="M0 0H9L4.5 5.5Z" fill="#c4c4c4"/></svg>
<!-- breadcrumb -->
<div class="a" style="left:217px;top:678px;width:1255px;height:20px;background:#3c3c3c"></div>
<div class="t u" style="left:221px;top:682px">Assets</div>
<svg class="a" style="left:265px;top:684px" width="7" height="11" viewBox="0 0 7 11"><path d="M1 1 L5.5 5.5 L1 10" fill="none" stroke="#a8a8a8" stroke-width="1.2"/></svg>
<div class="t u" style="left:277px;top:682px">Imports</div>
<svg class="a" style="left:330px;top:684px" width="7" height="11" viewBox="0 0 7 11"><path d="M1 1 L5.5 5.5 L1 10" fill="none" stroke="#a8a8a8" stroke-width="1.2"/></svg>
<div class="t u" style="left:339px;top:682px">Sci_fi_Drones</div>
<svg class="a" style="left:421px;top:684px" width="7" height="11" viewBox="0 0 7 11"><path d="M1 1 L5.5 5.5 L1 10" fill="none" stroke="#a8a8a8" stroke-width="1.2"/></svg>
<div class="t u" style="left:433px;top:682px;font-weight:bold;color:#d0d0d0">Prefabs</div>
<svg class="a" style="left:234px;top:700px" width="14" height="15" viewBox="0 0 14 15"><path d="M7 0.5 L13.5 3.8 L13.5 11.2 L7 14.5 L0.5 11.2 L0.5 3.8Z" fill="#67c6f5"/><path d="M0.8 4 L7 7.2 L13.2 4 M7 7.2 L7 14.3" fill="none" stroke="#2f6f95" stroke-width="1"/><path d="M7 0.5 L13.5 3.8 L7 7.2 L0.5 3.8Z" fill="#9ddcfb"/></svg>
<div class="t u" style="left:251px;top:701px">Robot_Collector</div>
<svg class="a" style="left:234px;top:716px" width="14" height="15" viewBox="0 0 14 15"><path d="M7 0.5 L13.5 3.8 L13.5 11.2 L7 14.5 L0.5 11.2 L0.5 3.8Z" fill="#67c6f5"/><path d="M0.8 4 L7 7.2 L13.2 4 M7 7.2 L7 14.3" fill="none" stroke="#2f6f95" stroke-width="1"/><path d="M7 0.5 L13.5 3.8 L7 7.2 L0.5 3.8Z" fill="#9ddcfb"/></svg>
<div class="t u" style="left:251px;top:717px">Robot_Guardian</div>
<svg class="a" style="left:234px;top:732px" width="14" height="15" viewBox="0 0 14 15"><path d="M7 0.5 L13.5 3.8 L13.5 11.2 L7 14.5 L0.5 11.2 L0.5 3.8Z" fill="#67c6f5"/><path d="M0.8 4 L7 7.2 L13.2 4 M7 7.2 L7 14.3" fill="none" stroke="#2f6f95" stroke-width="1"/><path d="M7 0.5 L13.5 3.8 L7 7.2 L0.5 3.8Z" fill="#9ddcfb"/></svg>
<div class="t u" style="left:251px;top:733px">Robot_Invader</div>
<svg class="a" style="left:234px;top:748px" width="14" height="15" viewBox="0 0 14 15"><path d="M7 0.5 L13.5 3.8 L13.5 11.2 L7 14.5 L0.5 11.2 L0.5 3.8Z" fill="#67c6f5"/><path d="M0.8 4 L7 7.2 L13.2 4 M7 7.2 L7 14.3" fill="none" stroke="#2f6f95" stroke-width="1"/><path d="M7 0.5 L13.5 3.8 L7 7.2 L0.5 3.8Z" fill="#9ddcfb"/></svg>
<div class="t u" style="left:251px;top:749px">Robot_Scout</div>
<svg class="a" style="left:234px;top:764px" width="14" height="15" viewBox="0 0 14 15"><path d="M7 0.5 L13.5 3.8 L13.5 11.2 L7 14.5 L0.5 11.2 L0.5 3.8Z" fill="#67c6f5"/><path d="M0.8 4 L7 7.2 L13.2 4 M7 7.2 L7 14.3" fill="none" stroke="#2f6f95" stroke-width="1"/><path d="M7 0.5 L13.5 3.8 L7 7.2 L0.5 3.8Z" fill="#9ddcfb"/></svg>
<div class="t u" style="left:251px;top:765px">Robot_Scout_HyperX</div>
<svg class="a" style="left:234px;top:780px" width="14" height="15" viewBox="0 0 14 15"><path d="M7 0.5 L13.5 3.8 L13.5 11.2 L7 14.5 L0.5 11.2 L0.5 3.8Z" fill="#67c6f5"/><path d="M0.8 4 L7 7.2 L13.2 4 M7 7.2 L7 14.3" fill="none" stroke="#2f6f95" stroke-width="1"/><path d="M7 0.5 L13.5 3.8 L7 7.2 L0.5 3.8Z" fill="#9ddcfb"/></svg>
<div class="t u" style="left:251px;top:781px">Robot_Scout_HyperX_Red</div>
<svg class="a" style="left:234px;top:796px" width="14" height="15" viewBox="0 0 14 15"><path d="M7 0.5 L13.5 3.8 L13.5 11.2 L7 14.5 L0.5 11.2 L0.5 3.8Z" fill="#67c6f5"/><path d="M0.8 4 L7 7.2 L13.2 4 M7 7.2 L7 14.3" fill="none" stroke="#2f6f95" stroke-width="1"/><path d="M7 0.5 L13.5 3.8 L7 7.2 L0.5 3.8Z" fill="#9ddcfb"/></svg>
<div class="t u" style="left:251px;top:797px">Robot_Scout_Rockie</div>
<div class="a" style="left:1409px;top:999px;width:48px;height:2px;background:#626262"></div>
<div class="a" style="left:1402px;top:995px;width:10px;height:10px;border-radius:50%;background:#9a9a9a"></div>
<!-- ===== PROFILER WINDOW ===== -->
<div class="a" style="left:980px;top:107px;width:900px;height:610px;background:#2b2b2b;border:1px solid #4a4a4a;border-radius:8px;overflow:hidden;box-shadow:0 10px 45px rgba(0,0,0,0.32),0 2px 8px rgba(0,0,0,0.2)">
 <div class="a" style="left:0;top:31px;width:898px;height:26px;background:#151515"></div>
 <div class="a" style="left:0;top:32px;width:82px;height:25px;background:#3c3c3c"></div>
 <div class="a" style="left:0;top:32px;width:82px;height:2px;background:#3a7abf;border-radius:2px 2px 0 0"></div>
 <!-- captures list -->
 <div class="a" style="left:0;top:57px;width:270px;height:552px;background:#383838"></div>
 <div class="a" style="left:0;top:57px;width:270px;height:43px;background:#3c3c3c"></div>
 <div class="a" style="left:0;top:99px;width:270px;height:1px;background:#2e2e2e"></div>
 <div class="a" style="left:222px;top:57px;width:1px;height:21px;background:#2e2e2e"></div>
 <div class="a" style="left:2px;top:80px;width:265px;height:15px;background:#2a2a2a;border:1px solid #212121;border-radius:3px"></div>
 <!-- right side -->
 <div class="a" style="left:270px;top:57px;width:1px;height:552px;background:#191919"></div>
 <div class="a" style="left:271px;top:57px;width:627px;height:21px;background:#3c3c3c"></div>
 <div class="a" style="left:271px;top:77px;width:627px;height:2px;background:#1e1e1e"></div>
 <div class="a" style="left:271px;top:79px;width:179px;height:39px;background:#202020"></div>
 <div class="a" style="left:450px;top:79px;width:1px;height:39px;background:#191919"></div>
 <div class="a" style="left:451px;top:78px;width:436px;height:20px;background:#141414"></div>
 <div class="a" style="left:451px;top:98px;width:436px;height:1px;background:#0a0a0a"></div>
 <div class="a" style="left:451px;top:99px;width:436px;height:20px;background:#141414"></div>
 <div class="a" style="left:451px;top:118px;width:436px;height:1px;background:#0a0a0a"></div>
 <div class="a" style="left:887px;top:78px;width:11px;height:149px;background:#2a2a2a"></div>
 <div class="a" style="left:271px;top:119px;width:179px;height:107px;background:#3e3e3e"></div>
 <div class="a" style="left:450px;top:119px;width:1px;height:107px;background:#191919"></div>
 <div class="a" style="left:451px;top:119px;width:436px;height:107px;background:#3d3d3d"></div>
 <div class="a" style="left:271px;top:226px;width:627px;height:2px;background:#232323"></div>
 <div class="a" style="left:271px;top:228px;width:627px;height:19px;background:#3c3c3c"></div>
 <div class="a" style="left:271px;top:247px;width:627px;height:362px;background:#222222"></div>
</div>

<!-- ===== PROFILER TEXT ===== -->
<svg class="a" style="left:990px;top:115px" width="13" height="15" viewBox="0 0 17 20"><path d="M8.5 0 L17 5 L17 15 L8.5 20 L0 15 L0 5Z" fill="#6d7d8c"/><path d="M8.5 2.4 L14.8 6 L14.8 14 L8.5 17.6 L2.2 14 L2.2 6Z" fill="#c8d4de"/><rect x="7.8" y="2.2" width="1.4" height="4.5" fill="#55626e"/><ellipse cx="8.5" cy="6.8" rx="2.4" ry="1.1" fill="#55626e"/><path d="M4 9.5 L7 11.2 L7 14.5 L4 12.8Z M13 9.5 L10 11.2 L10 14.5 L13 12.8Z" fill="#55626e"/><circle cx="13.5" cy="15" r="3.5" fill="#dfe6ee"/><text x="13.5" y="17.4" font-family="Liberation Sans" font-weight="bold" font-size="6" fill="#444" text-anchor="middle">6</text></svg>
<div class="t u" style="left:1009px;top:116px;font-size:13px;color:#d2d2d2">Profiler</div>
<div class="a" style="left:1761px;top:122px;width:10px;height:1px;background:#5a5a5a"></div>
<div class="a" style="left:1806px;top:117px;width:10px;height:10px;border:1px solid #b4b4b4;border-radius:1px"></div>
<svg class="a" style="left:1851px;top:116px" width="12" height="12" viewBox="0 0 12 12"><path d="M1 1L11 11M11 1L1 11" stroke="#b4b4b4" stroke-width="1"/></svg>
<div class="a kb" style="left:1867px;top:146px;background:#d8d8d8;box-shadow:0 4px 0 #d8d8d8,0 8px 0 #d8d8d8"></div>
<svg class="a" style="left:988px;top:146px" width="14" height="14" viewBox="0 0 14 14"><circle cx="7.5" cy="8" r="5.2" fill="#cfcfcf"/><path d="M7.5 8 L10 5" stroke="#3c3c3c" stroke-width="1.5"/><path d="M1 2 L3.5 0.5" stroke="#cfcfcf" stroke-width="1.4"/></svg>
<div class="t u" style="left:1005px;top:146px;font-size:12.8px;color:#c8c8c8">Profiler</div>
<div class="t" style="left:988px;top:167px;font-size:14.6px;color:#d8d8d8;line-height:14px;-webkit-text-stroke:0.45px #d8d8d8">Captures List</div>
<div class="t u" style="left:1208px;top:168px;font-size:12.6px">Import</div>
<svg class="a" style="left:988px;top:190px" width="9" height="9" viewBox="0 0 9 9"><circle cx="3.5" cy="3.5" r="2.7" fill="none" stroke="#c0c0c0" stroke-width="1.2"/><path d="M5.5 5.5L8.5 8.5" stroke="#c0c0c0" stroke-width="1.5"/></svg>
<div class="t u" style="left:1040px;top:456px;font-size:12.6px;color:#c8c8c8">No Profiler captures found</div>
<svg class="a" style="left:1258px;top:168px" width="13" height="13" viewBox="0 0 13 13"><rect x="0.6" y="0.6" width="11.8" height="11.8" fill="none" stroke="#c4c4c4" stroke-width="1.2"/><path d="M5 0.6V12.4" stroke="#c4c4c4" stroke-width="1.2"/><path d="M1.8 3H3.8M1.8 5H3.8M1.8 7H3.8M1.8 9H3.8" stroke="#c4c4c4" stroke-width="0.9"/></svg>
<div class="a" style="left:1276px;top:164px;width:1px;height:20px;background:#2e2e2e"></div>
<div class="t u" style="left:1280px;top:168px;font-size:12.6px">Profiler Modules</div>
<svg class="a" style="left:1417px;top:172px" width="9" height="6" viewBox="0 0 9 6"><path d="M0 0H9L4.5 5.5Z" fill="#c4c4c4"/></svg>
<div class="a" style="left:1430px;top:164px;width:1px;height:20px;background:#2e2e2e"></div>
<div class="t u" style="left:1434px;top:168px;font-size:12.6px">Play Mode</div>
<svg class="a" style="left:1495px;top:172px" width="9" height="6" viewBox="0 0 9 6"><path d="M0 0H9L4.5 5.5Z" fill="#c4c4c4"/></svg>
<div class="a" style="left:1509px;top:164px;width:25px;height:20px;background:#4a4a4a"></div>
<div class="a" style="left:1514px;top:167px;width:14px;height:14px;border-radius:50%;border:1.3px solid #d0d0d0"></div>
<div class="a" style="left:1516.5px;top:169.5px;width:9px;height:9px;border-radius:50%;background:#f04848"></div>
<div class="a" style="left:1534px;top:164px;width:1px;height:20px;background:#2e2e2e"></div>
<div class="a" style="left:1560px;top:164px;width:1px;height:20px;background:#2e2e2e"></div>
<div class="a" style="left:1586px;top:164px;width:1px;height:20px;background:#2e2e2e"></div>
<div class="a" style="left:1612px;top:164px;width:1px;height:20px;background:#2e2e2e"></div>
<svg class="a" style="left:1541px;top:169px" width="12" height="11" viewBox="0 0 12 11"><rect x="0.5" y="0.5" width="2" height="10" fill="#9a9a9a"/><path d="M11 0.5 L3.5 5.5 L11 10.5Z" fill="#9a9a9a"/></svg>
<svg class="a" style="left:1567px;top:169px" width="12" height="11" viewBox="0 0 12 11"><path d="M1 0.5 L8.5 5.5 L1 10.5Z" fill="#9a9a9a"/><rect x="9.5" y="0.5" width="2" height="10" fill="#9a9a9a"/></svg>
<svg class="a" style="left:1592px;top:169px" width="14" height="11" viewBox="0 0 14 11"><path d="M0.5 1.5 L5.5 5.5 L0.5 9.5Z M6 1.5 L11 5.5 L6 9.5Z" fill="#9a9a9a"/><rect x="11.5" y="0.5" width="2" height="10" fill="#9a9a9a"/></svg>
<div class="t u" style="left:1615px;top:168px;font-size:12.6px">Frame: 0 / 0</div>
<div class="a" style="left:1695px;top:164px;width:1px;height:20px;background:#2e2e2e"></div>
<div class="t u" style="left:1700px;top:168px;font-size:12.6px;color:#7a7a7a">Clear</div>
<div class="a" style="left:1735px;top:164px;width:1px;height:20px;background:#2e2e2e"></div>
<div class="t u" style="left:1741px;top:168px;font-size:12.6px">Clear on Play</div>
<div class="a" style="left:1820px;top:164px;width:1px;height:20px;background:#2e2e2e"></div>
<div class="a" style="left:1825px;top:164px;width:55px;height:20px;overflow:hidden"><div class="t u" style="left:0;top:4px;font-size:12.6px">Deep Profile</div></div>
<div class="t" style="left:1260px;top:190px;font-size:14.4px;color:#d8d8d8;line-height:14px">Highlights</div>
<div class="t" style="left:1259px;top:211px;font-size:11.3px;color:#b4b4b4;line-height:11px">Target Frame Time: 60 FPS</div>
<svg class="a" style="left:1411px;top:213px" width="9" height="6" viewBox="0 0 9 6"><path d="M0 0H9L4.5 5.5Z" fill="#c4c4c4"/></svg>
<div class="a" style="left:1433px;top:188px;width:34px;height:15px;background:#080808;border-radius:3px"></div>
<div class="t u" style="left:1437px;top:190px;font-size:12.6px;color:#e8e8e8">CPU</div>
<div class="a" style="left:1433px;top:208px;width:34px;height:15px;background:#080808;border-radius:3px"></div>
<div class="t u" style="left:1437px;top:210px;font-size:12.6px;color:#e8e8e8">GPU</div>
<svg class="a" style="left:1256px;top:230px" width="15" height="15" viewBox="0 0 15 15"><path d="M2.5 8 A5 5 0 1 1 12.5 8Z" fill="#cfcfcf"/><path d="M7.5 7.5 L10 4" stroke="#3e3e3e" stroke-width="1.3"/><text x="7.5" y="14.6" font-family="Liberation Sans" font-weight="bold" font-size="6.5" fill="#cfcfcf" text-anchor="middle">CPU</text></svg>
<div class="t" style="left:1276px;top:231px;font-size:14.6px;color:#d0d0d0;line-height:15px">CPU Usage</div>
<div class="a" style="left:1257px;top:257px;width:6px;height:6px;background:#73a80f"></div>
<div class="t u" style="left:1268px;top:253.5px;font-size:12.6px">Rendering</div>
<div class="a" style="left:1412px;top:258px;width:14px;height:1px;background:#5e5e5e;box-shadow:0 2px 0 #5e5e5e,0 4px 0 #5e5e5e"></div>
<div class="a" style="left:1257px;top:273px;width:6px;height:6px;background:#3a9ad0"></div>
<div class="t u" style="left:1268px;top:269.5px;font-size:12.6px">Scripts</div>
<div class="a" style="left:1412px;top:274px;width:14px;height:1px;background:#5e5e5e;box-shadow:0 2px 0 #5e5e5e,0 4px 0 #5e5e5e"></div>
<div class="a" style="left:1257px;top:288.5px;width:6px;height:6px;background:#e8830f"></div>
<div class="t u" style="left:1268px;top:285.0px;font-size:12.6px">Physics</div>
<div class="a" style="left:1412px;top:289.5px;width:14px;height:1px;background:#5e5e5e;box-shadow:0 2px 0 #5e5e5e,0 4px 0 #5e5e5e"></div>
<div class="a" style="left:1257px;top:304.3px;width:6px;height:6px;background:#4bbdd8"></div>
<div class="t u" style="left:1268px;top:300.8px;font-size:12.6px">Animation</div>
<div class="a" style="left:1412px;top:305.3px;width:14px;height:1px;background:#5e5e5e;box-shadow:0 2px 0 #5e5e5e,0 4px 0 #5e5e5e"></div>
<div class="a" style="left:1257px;top:320px;width:6px;height:6px;background:#877812"></div>
<div class="t u" style="left:1268px;top:316.5px;font-size:12.6px">GarbageCollector</div>
<div class="a" style="left:1412px;top:321px;width:14px;height:1px;background:#5e5e5e;box-shadow:0 2px 0 #5e5e5e,0 4px 0 #5e5e5e"></div>
<div class="a" style="left:1436px;top:231px;width:108px;height:16px;background:#141414;border-radius:3px"></div>
<div class="t u" style="left:1439px;top:233px;font-size:12.2px;color:#e0e0e0">0.1ms (10000FPS)</div>
<svg class="a" style="left:1868px;top:231px" width="9" height="6" viewBox="0 0 9 6"><path d="M0 5.5H9L4.5 0Z" fill="#c4c4c4"/></svg>
<div class="a" style="left:1868px;top:243px;width:9px;height:20px;background:#5f5f5f;border-radius:5px"></div>
<svg class="a" style="left:1868px;top:323px" width="9" height="6" viewBox="0 0 9 6"><path d="M0 0H9L4.5 5.5Z" fill="#c4c4c4"/></svg>
<div class="t u" style="left:1255px;top:339px;font-size:12.6px">Timeline</div>
<svg class="a" style="left:1418px;top:342px" width="9" height="6" viewBox="0 0 9 6"><path d="M0 0H9L4.5 5.5Z" fill="#c4c4c4"/></svg>
<div class="a" style="left:1430px;top:335px;width:2px;height:20px;background:#2a2a2a"></div>
<div class="a" style="left:1465px;top:335px;width:1px;height:20px;background:#2a2a2a"></div>
<div class="t u" style="left:1437px;top:339px;font-size:12.6px;color:#b8b8b8">Live</div>
<div class="t u" style="left:1598px;top:339px;font-size:12.6px;color:#b8b8b8">CPU:--ms</div>
<div class="t u" style="left:1664px;top:339px;font-size:12.6px;color:#b8b8b8">GPU:--ms</div>
<div class="a" style="left:1853px;top:335px;width:1px;height:20px;background:#2a2a2a"></div>
<div class="a kb" style="left:1865px;top:340px"></div>
<div class="t u" style="left:1255px;top:358px;font-size:12.8px;color:#c8c8c8">No frame data available. Select a frame from the charts above to see its details here.</div>
<!-- ===== WINDOW MENU ===== -->
<div class="a" style="left:373px;top:23px;width:58px;height:19px;background:#f5f5f5"></div>
<div class="a" style="left:373px;top:42px;width:294px;height:486px;background:#f9f9f9;border-radius:0 0 8px 8px;box-shadow:0 2px 6px rgba(0,0,0,0.25);border:1px solid #e4e4e4;border-top:none"></div>
<div class="a" style="left:379px;top:239px;width:282px;height:21px;background:#f0f0f0;border-radius:4px"></div>
<div class="t mi" style="left:411px;top:50px">Layouts</div>
<svg class="a" style="left:645px;top:51px" width="7" height="11" viewBox="0 0 7 11"><path d="M1 1 L5.5 5.5 L1 10" fill="none" stroke="#1a1a1a" stroke-width="1.1"/></svg>
<div class="t mi" style="left:411px;top:72px">Panels</div>
<svg class="a" style="left:645px;top:73px" width="7" height="11" viewBox="0 0 7 11"><path d="M1 1 L5.5 5.5 L1 10" fill="none" stroke="#1a1a1a" stroke-width="1.1"/></svg>
<div class="a" style="left:382px;top:93px;width:276px;height:1px;background:#e0e0e0"></div>
<div class="t mi" style="left:411px;top:102px">Next Window</div>
<div class="t mi" style="right:1288px;top:102px">Ctrl+Tab</div>
<div class="t mi" style="left:411px;top:124px">Previous Window</div>
<div class="t mi" style="right:1288px;top:124px">Ctrl+Shift+Tab</div>
<div class="a" style="left:382px;top:146px;width:276px;height:1px;background:#e0e0e0"></div>
<div class="t mi" style="left:411px;top:155px">General</div>
<svg class="a" style="left:645px;top:156px" width="7" height="11" viewBox="0 0 7 11"><path d="M1 1 L5.5 5.5 L1 10" fill="none" stroke="#1a1a1a" stroke-width="1.1"/></svg>
<div class="t mi" style="left:411px;top:177px">2D</div>
<svg class="a" style="left:645px;top:178px" width="7" height="11" viewBox="0 0 7 11"><path d="M1 1 L5.5 5.5 L1 10" fill="none" stroke="#1a1a1a" stroke-width="1.1"/></svg>
<div class="t mi" style="left:411px;top:199px">Accessibility</div>
<svg class="a" style="left:645px;top:200px" width="7" height="11" viewBox="0 0 7 11"><path d="M1 1 L5.5 5.5 L1 10" fill="none" stroke="#1a1a1a" stroke-width="1.1"/></svg>
<div class="t mi" style="left:411px;top:221px">AI</div>
<svg class="a" style="left:645px;top:222px" width="7" height="11" viewBox="0 0 7 11"><path d="M1 1 L5.5 5.5 L1 10" fill="none" stroke="#1a1a1a" stroke-width="1.1"/></svg>
<div class="t mi" style="left:411px;top:243px">Analysis</div>
<svg class="a" style="left:645px;top:244px" width="7" height="11" viewBox="0 0 7 11"><path d="M1 1 L5.5 5.5 L1 10" fill="none" stroke="#1a1a1a" stroke-width="1.1"/></svg>
<div class="t mi" style="left:411px;top:265px">Animation</div>
<svg class="a" style="left:645px;top:266px" width="7" height="11" viewBox="0 0 7 11"><path d="M1 1 L5.5 5.5 L1 10" fill="none" stroke="#1a1a1a" stroke-width="1.1"/></svg>
<div class="t mi" style="left:411px;top:287px">Audio</div>
<svg class="a" style="left:645px;top:288px" width="7" height="11" viewBox="0 0 7 11"><path d="M1 1 L5.5 5.5 L1 10" fill="none" stroke="#1a1a1a" stroke-width="1.1"/></svg>
<div class="t mi" style="left:411px;top:309px">Multiplayer</div>
<svg class="a" style="left:645px;top:310px" width="7" height="11" viewBox="0 0 7 11"><path d="M1 1 L5.5 5.5 L1 10" fill="none" stroke="#1a1a1a" stroke-width="1.1"/></svg>
<div class="t mi" style="left:411px;top:331px">Package Management</div>
<svg class="a" style="left:645px;top:332px" width="7" height="11" viewBox="0 0 7 11"><path d="M1 1 L5.5 5.5 L1 10" fill="none" stroke="#1a1a1a" stroke-width="1.1"/></svg>
<div class="t mi" style="left:411px;top:353px">Rendering</div>
<svg class="a" style="left:645px;top:354px" width="7" height="11" viewBox="0 0 7 11"><path d="M1 1 L5.5 5.5 L1 10" fill="none" stroke="#1a1a1a" stroke-width="1.1"/></svg>
<div class="t mi" style="left:411px;top:375px">Search</div>
<svg class="a" style="left:645px;top:376px" width="7" height="11" viewBox="0 0 7 11"><path d="M1 1 L5.5 5.5 L1 10" fill="none" stroke="#1a1a1a" stroke-width="1.1"/></svg>
<div class="t mi" style="left:411px;top:397px">Sequencing</div>
<svg class="a" style="left:645px;top:398px" width="7" height="11" viewBox="0 0 7 11"><path d="M1 1 L5.5 5.5 L1 10" fill="none" stroke="#1a1a1a" stroke-width="1.1"/></svg>
<div class="t mi" style="left:411px;top:419px">Text</div>
<svg class="a" style="left:645px;top:420px" width="7" height="11" viewBox="0 0 7 11"><path d="M1 1 L5.5 5.5 L1 10" fill="none" stroke="#1a1a1a" stroke-width="1.1"/></svg>
<div class="t mi" style="left:411px;top:441px">TextMeshPro</div>
<svg class="a" style="left:645px;top:442px" width="7" height="11" viewBox="0 0 7 11"><path d="M1 1 L5.5 5.5 L1 10" fill="none" stroke="#1a1a1a" stroke-width="1.1"/></svg>
<div class="t mi" style="left:411px;top:463px">UI Toolkit</div>
<svg class="a" style="left:645px;top:464px" width="7" height="11" viewBox="0 0 7 11"><path d="M1 1 L5.5 5.5 L1 10" fill="none" stroke="#1a1a1a" stroke-width="1.1"/></svg>
<div class="t mi" style="left:411px;top:485px">Version Control</div>
<svg class="a" style="left:645px;top:486px" width="7" height="11" viewBox="0 0 7 11"><path d="M1 1 L5.5 5.5 L1 10" fill="none" stroke="#1a1a1a" stroke-width="1.1"/></svg>
<div class="t mi" style="left:411px;top:507px">Visual Scripting</div>
<svg class="a" style="left:645px;top:508px" width="7" height="11" viewBox="0 0 7 11"><path d="M1 1 L5.5 5.5 L1 10" fill="none" stroke="#1a1a1a" stroke-width="1.1"/></svg>
<!-- ===== ANALYSIS SUBMENU ===== -->
<div class="a" style="left:662px;top:236px;width:281px;height:271px;background:#f9f9f9;border-radius:8px;box-shadow:0 2px 8px rgba(0,0,0,0.28);border:1px solid #e4e4e4"></div>
<div class="a" style="left:667px;top:239px;width:270px;height:21px;background:#f0f0f0;border-radius:4px"></div>
<div class="t mi" style="left:699px;top:243px">Profiler</div>
<div class="t mi" style="right:1012px;top:243px">Ctrl+7</div>
<div class="t mi" style="left:699px;top:265px">Profiler (Standalone Process)</div>
<div class="t mi" style="left:699px;top:287px">Frame Debugger</div>
<div class="t mi" style="left:699px;top:309px">Physics Debugger</div>
<div class="a" style="left:670px;top:331px;width:264px;height:1px;background:#e0e0e0"></div>
<div class="t mi" style="left:699px;top:340px">Import Activity</div>
<div class="a" style="left:670px;top:362px;width:264px;height:1px;background:#e0e0e0"></div>
<div class="t mi" style="left:699px;top:371px">Performance Markers</div>
<div class="a" style="left:670px;top:393px;width:264px;height:1px;background:#e0e0e0"></div>
<div class="t mi" style="left:699px;top:402px">Input Debugger</div>
<div class="a" style="left:670px;top:424px;width:264px;height:1px;background:#e0e0e0"></div>
<div class="t mi" style="left:699px;top:433px">Rendering Debugger</div>
<div class="t mi" style="left:699px;top:455px">Render Graph Viewer</div>
<div class="a" style="left:670px;top:477px;width:264px;height:1px;background:#e0e0e0"></div>
<div class="t mi" style="left:699px;top:486px">IMGUI Debugger</div>
<!-- status bar -->
<div class="a" style="left:9px;top:1010px;width:1920px;height:22px;background:#141414"></div>
<!-- taskbar -->
<div class="a" style="left:0;top:1032px;width:1929px;height:48px;background:#eeeeee"></div>
<!-- ===== LEFT STRIP CONTENT ===== -->
<div class="a" style="left:7px;top:87px;width:2px;height:945px;background:#151515"></div>
<svg class="a" style="left:1px;top:89px" width="7" height="6" viewBox="0 0 7 6"><path d="M0 5.5H7L3.5 0Z" fill="#8a3cf0"/></svg>
<div class="a" style="left:1px;top:111px;width:6px;height:909px;background:#7f3bef;border-radius:3px"></div>
<svg class="a" style="left:1px;top:1025px" width="7" height="6" viewBox="0 0 7 6"><path d="M0 0H7L3.5 5.5Z" fill="#8a3cf0"/></svg>
<!-- ===== STATUS BAR CONTENT ===== -->
<svg class="a" style="left:12px;top:1014px" width="14" height="13" viewBox="0 0 14 13"><path d="M7 0.5 L13.6 12.5 H0.4Z" fill="#f2c200"/><path d="M7 4 V8.6" stroke="#111" stroke-width="1.6"/><circle cx="7" cy="10.5" r="0.9" fill="#111"/></svg>
<div class="t" style="left:29px;top:1015px;font-size:12.83px;color:#deaa1c;line-height:14px">Assets\Scripts\Testing\TestPanel.cs(36,20): warning CS0618: 'Object.FindObjectOfType&lt;T&gt;()' is obsolete: 'Object.FindObjectOfType has been deprecated. Use Object.FindFirstObjectByType instead or if finding any instance is acceptable the faster Object.FindAnyObjectByType'</div>
<div class="a" style="left:1849px;top:1011px;width:1px;height:20px;background:#2a2a2a"></div>
<div class="a" style="left:1875px;top:1011px;width:1px;height:20px;background:#2a2a2a"></div>
<div class="a" style="left:1901px;top:1011px;width:1px;height:20px;background:#2a2a2a"></div>
<svg class="a" style="left:1855px;top:1014px" width="16" height="15" viewBox="0 0 16 15"><ellipse cx="8" cy="8.5" rx="4" ry="5" fill="#c4c4c4"/><path d="M2 5 L5 7 M14 5 L11 7 M1.5 9 H4 M14.5 9 H12 M2 13 L5 11 M14 13 L11 11 M6 3 L5 1 M10 3 L11 1" stroke="#c4c4c4" stroke-width="1.2"/><path d="M1 1 L15 14" stroke="#121212" stroke-width="2.2"/><path d="M1 1 L15 14" stroke="#c4c4c4" stroke-width="1"/></svg>
<svg class="a" style="left:1882px;top:1014px" width="14" height="15" viewBox="0 0 14 15"><ellipse cx="7" cy="3" rx="6" ry="2.5" fill="#c4c4c4"/><path d="M1 5 Q7 9 13 5 V8 Q7 12 1 8Z M1 10 Q7 14 13 10 V12 Q7 15.5 1 12Z" fill="#c4c4c4"/><path d="M1 1 L13 14" stroke="#121212" stroke-width="2"/></svg>
<svg class="a" style="left:1908px;top:1014px" width="14" height="14" viewBox="0 0 14 14"><circle cx="7" cy="7" r="6.2" fill="none" stroke="#c4c4c4" stroke-width="1.2"/><path d="M4 7.2 L6.2 9.3 L10 5" fill="none" stroke="#c4c4c4" stroke-width="1.3"/></svg>
<!-- ===== TASKBAR ===== -->
<div class="a" style="left:0;top:1032px;width:1929px;height:1px;background:#d6d6d6"></div>
<div class="a" style="left:30px;top:1044px;width:20px;height:20px;border-radius:50%;background:radial-gradient(circle at 35% 30%,#f7c33a,#ee7a14)"></div>
<div class="a" style="left:39px;top:1037px;width:16px;height:16px;border-radius:50%;background:#c9261c;border:1px solid #e8e8e8"></div>
<div class="t" style="left:44px;top:1040px;font-size:10px;color:#fff;line-height:10px">3</div>
<div class="t" style="left:60px;top:1042px;font-size:11.5px;color:#1a1a1a;line-height:12px">79°F</div>
<div class="t" style="left:60px;top:1058px;font-size:11.5px;color:#555;line-height:12px">Sunny</div>
<svg class="a" style="left:626px;top:1045px" width="23" height="23" viewBox="0 0 23 23"><defs><linearGradient id="wg" x1="0" y1="0" x2="1" y2="1"><stop offset="0" stop-color="#3ec6f5"/><stop offset="1" stop-color="#0a78d4"/></linearGradient></defs><rect x="0" y="0" width="10.8" height="10.8" fill="url(#wg)"/><rect x="12.2" y="0" width="10.8" height="10.8" fill="url(#wg)"/><rect x="0" y="12.2" width="10.8" height="10.8" fill="url(#wg)"/><rect x="12.2" y="12.2" width="10.8" height="10.8" fill="url(#wg)"/></svg>
<div class="a" style="left:663px;top:1041px;width:218px;height:30px;border-radius:15px;background:#fbfbfb;border:1px solid #dadada"></div>
<svg class="a" style="left:674px;top:1049px" width="15" height="15" viewBox="0 0 15 15"><circle cx="6" cy="6" r="4.8" fill="none" stroke="#1a1a1a" stroke-width="1.5"/><path d="M9.5 9.5 L14 14" stroke="#1a1a1a" stroke-width="1.6"/></svg>
<div class="t" style="left:699px;top:1049px;font-size:12.5px;color:#555;line-height:14px">Search</div>
<div class="a" style="left:900px;top:1045px;width:18px;height:16px;background:linear-gradient(135deg,#fafafa,#d0d0d0);border-radius:1px"></div>
<div class="a" style="left:894px;top:1051px;width:18px;height:16px;background:linear-gradient(135deg,#3a3a3a,#111);border-radius:1px"></div>
<div class="a" style="left:900px;top:1051px;width:12px;height:10px;background:linear-gradient(135deg,#c8c8c8,#9a9a9a)"></div>
<svg class="a" style="left:938px;top:1045px" width="25" height="22" viewBox="0 0 25 22"><path d="M0 2 Q0 0.5 1.5 0.5 H8 L10 3 H25 V21.5 H0Z" fill="#e9a900"/><rect x="0" y="3.5" width="25" height="18" fill="#fcd34d"/><rect x="5" y="15" width="15" height="7" rx="1.5" fill="#1a8ee0"/></svg>
<svg class="a" style="left:982px;top:1044px" width="24" height="24" viewBox="0 0 24 24"><circle cx="12" cy="12" r="12" fill="#34a853"/><path d="M12 12 L1.6 6 A12 12 0 0 1 22.4 6Z" fill="#ea4335"/><path d="M12 12 L22.4 6 A12 12 0 0 1 12 24Z" fill="#fbbc04"/><circle cx="12" cy="12" r="5.4" fill="#fff"/><circle cx="12" cy="12" r="4.3" fill="#1a73e8"/></svg>
<svg class="a" style="left:1025px;top:1039px" width="30" height="30" viewBox="0 0 30 30"><circle cx="10" cy="8" r="3.5" fill="#8b8cf0"/><rect x="5" y="12" width="18" height="15" rx="4" fill="#6a6ee6"/><rect x="0" y="14" width="11" height="10" rx="1.5" fill="#4b4fc8"/><text x="5.5" y="22" font-family="Liberation Sans" font-weight="bold" font-size="8" fill="#fff" text-anchor="middle">T</text><circle cx="23" cy="7" r="7" fill="#13a10e" stroke="#eee" stroke-width="1"/><path d="M19.5 7 L22 9.4 L26.3 5" stroke="#fff" stroke-width="1.6" fill="none"/></svg>
<svg class="a" style="left:1070px;top:1039px" width="30" height="30" viewBox="0 0 30 30"><circle cx="12" cy="17" r="12" fill="#5865f2"/><path d="M5.5 13 Q12 9.5 18.5 13 L19.5 20 Q12 24 4.5 20Z" fill="#fff"/><circle cx="9.3" cy="17" r="1.8" fill="#5865f2"/><circle cx="14.7" cy="17" r="1.8" fill="#5865f2"/><circle cx="21.5" cy="7.5" r="6.5" fill="#e84a4f" stroke="#eee" stroke-width="1"/><circle cx="21.5" cy="7.5" r="2.6" fill="#fff"/></svg>
<div class="a" style="left:947px;top:1073px;width:6px;height:3px;border-radius:2px;background:#8a8a8a"></div>
<div class="a" style="left:991px;top:1073px;width:6px;height:3px;border-radius:2px;background:#8a8a8a"></div>
<div class="a" style="left:1035px;top:1073px;width:6px;height:3px;border-radius:2px;background:#8a8a8a"></div>
<div class="a" style="left:1079px;top:1073px;width:6px;height:3px;border-radius:2px;background:#8a8a8a"></div>
<div class="a" style="left:1167px;top:1073px;width:6px;height:3px;border-radius:2px;background:#8a8a8a"></div>
<div class="a" style="left:1211px;top:1073px;width:6px;height:3px;border-radius:2px;background:#8a8a8a"></div>
<div class="a" style="left:1255px;top:1073px;width:6px;height:3px;border-radius:2px;background:#8a8a8a"></div>
<div class="a" style="left:1107px;top:1037px;width:38px;height:38px;border-radius:4px;background:#f8f8f8;border:1px solid #e3e3e3"></div>
<div class="a" style="left:1118px;top:1072px;width:16px;height:3px;border-radius:2px;background:#0f6cd6"></div>
<svg class="a" style="left:1114px;top:1044px" width="21" height="24" viewBox="0 0 17 20"><path d="M8.5 0 L17 5 L17 15 L8.5 20 L0 15 L0 5Z" fill="#3f4a55"/><path d="M8.5 2.4 L14.8 6 L14.8 14 L8.5 17.6 L2.2 14 L2.2 6Z" fill="#c5cdd5"/><rect x="7.8" y="2.2" width="1.4" height="4.5" fill="#3f4a55"/><ellipse cx="8.5" cy="6.8" rx="2.4" ry="1.1" fill="#3f4a55"/><path d="M4 9.5 L7 11.2 L7 14.5 L4 12.8Z M13 9.5 L10 11.2 L10 14.5 L13 12.8Z" fill="#3f4a55"/><circle cx="14" cy="15" r="3.6" fill="#dfe4e9"/><text x="14" y="17.6" font-family="Liberation Sans" font-weight="bold" font-size="6.5" fill="#555" text-anchor="middle">6</text></svg>
<svg class="a" style="left:1160px;top:1044px" width="21" height="24" viewBox="0 0 17 20"><path d="M8.5 0 L17 5 L17 15 L8.5 20 L0 15 L0 5Z" fill="#a9b3bd"/><path d="M8.5 2.4 L14.8 6 L14.8 14 L8.5 17.6 L2.2 14 L2.2 6Z" fill="#4b5560"/><rect x="7.8" y="2.2" width="1.4" height="4.5" fill="#a9b3bd"/><ellipse cx="8.5" cy="6.8" rx="2.4" ry="1.1" fill="#a9b3bd"/><path d="M4 9.5 L7 11.2 L7 14.5 L4 12.8Z M13 9.5 L10 11.2 L10 14.5 L13 12.8Z" fill="#a9b3bd"/></svg>
<svg class="a" style="left:1202px;top:1044px" width="25" height="24" viewBox="0 0 25 24"><path d="M2 2 H24 V22 H2Z" fill="#0d7bf7"/><path d="M10 0.5 H23 L24.5 14 L14 23.5Z" fill="#fdb60d"/><path d="M0 7 L13 4 L12 24 H0Z" fill="#ff1f6e"/><rect x="5" y="4.5" width="15" height="15" fill="#000"/><text x="12.5" y="12.8" font-family="Liberation Sans" font-weight="bold" font-size="7" fill="#fff" text-anchor="middle">RD</text><rect x="7" y="16" width="5" height="1.2" fill="#fff"/></svg>
<svg class="a" style="left:1246px;top:1047px" width="25" height="19" viewBox="0 0 25 19"><rect x="0" y="0" width="25" height="19" rx="1.5" fill="#3a3a3a"/><rect x="0" y="0" width="25" height="3" fill="#8a8a8a"/><path d="M3.5 7 L8.5 10.5 L3.5 14" stroke="#d8d8d8" stroke-width="2" fill="none"/><rect x="10" y="13" width="8" height="1.8" fill="#d8d8d8"/></svg>
<div class="a" style="left:1282px;top:1036px;width:40px;height:40px;border-radius:5px;background:#e9b1ad"></div>
<div class="a" style="left:1286px;top:1072px;width:32px;height:3px;border-radius:2px;background:#c42b1c"></div>
<svg class="a" style="left:1290px;top:1044px" width="25" height="25" viewBox="0 0 25 25"><path d="M18 0.5 L24.5 3.5 V21.5 L18 24.5 L7 14.5 L3 17.5 L0.5 16 V9 L3 7.5 L7 10.5Z" fill="#1f9cf0"/><path d="M18 0.5 L24.5 3.5 V21.5 L18 24.5Z" fill="#0065a9"/><path d="M18 7 L11 12.5 L18 18Z" fill="#e9b1ad"/><path d="M3 10 L5.5 12.5 L3 15Z" fill="#e9b1ad"/></svg>
<svg class="a" style="left:1711px;top:1052px" width="12" height="7" viewBox="0 0 12 7"><path d="M1 6 L6 1 L11 6" stroke="#1a1a1a" stroke-width="1.3" fill="none"/></svg>
<svg class="a" style="left:1740px;top:1047px" width="18" height="18" viewBox="0 0 18 18"><path d="M2 9 A6.5 6.5 0 0 1 14 5" stroke="#1a1a1a" stroke-width="1.2" fill="none"/><path d="M14.5 2 V5.5 H11" stroke="#1a1a1a" stroke-width="1.2" fill="none"/><path d="M6 16 L2 15.5 L3.5 12" stroke="#1a1a1a" stroke-width="1.2" fill="none"/><circle cx="12.5" cy="13" r="3.5" fill="#0f6cd6"/></svg>
<svg class="a" style="left:1772px;top:1049px" width="18" height="12" viewBox="0 0 18 12"><path d="M3.5 11.5 Q0.3 11.5 0.5 8.5 Q0.8 5.6 3.8 5.8 Q4.6 1 9.4 0.8 Q13.2 1 14 4.8 Q17.6 5 17.5 8.3 Q17.3 11.5 14 11.5Z" fill="#1e8fe6"/><path d="M3.5 11.5 Q0.3 11.5 0.5 8.5 Q0.8 5.6 3.8 5.8 L9 11.5Z" fill="#0f5fc8"/></svg>
<svg class="a" style="left:1805px;top:1047px" width="17" height="17" viewBox="0 0 17 17"><path d="M9 3 H1 V12.5 H11" stroke="#1a1a1a" stroke-width="1.1" fill="none"/><path d="M4 15.5 H10 M6.5 12.5 V15.5" stroke="#1a1a1a" stroke-width="1.1"/><rect x="12" y="1" width="3.5" height="5" rx="1.5" fill="none" stroke="#1a1a1a" stroke-width="1.1"/><path d="M13.7 6 V16" stroke="#1a1a1a" stroke-width="1.1"/></svg>
<svg class="a" style="left:1829px;top:1049px" width="17" height="14" viewBox="0 0 17 14"><path d="M1 5 H4 L8 1.5 V12.5 L4 9 H1Z" stroke="#1a1a1a" stroke-width="1.1" fill="none"/><path d="M10.5 4.5 Q12 7 10.5 9.5 M12.5 2.8 Q15 7 12.5 11.2" stroke="#1a1a1a" stroke-width="1.1" fill="none"/></svg>
<div class="t" style="right:19px;top:1042px;font-size:12px;color:#1a1a1a;line-height:12px">3:17 PM</div>
<div class="t" style="right:19px;top:1058px;font-size:12.2px;color:#1a1a1a;line-height:12px">2/9/2026</div>
</body></html>
